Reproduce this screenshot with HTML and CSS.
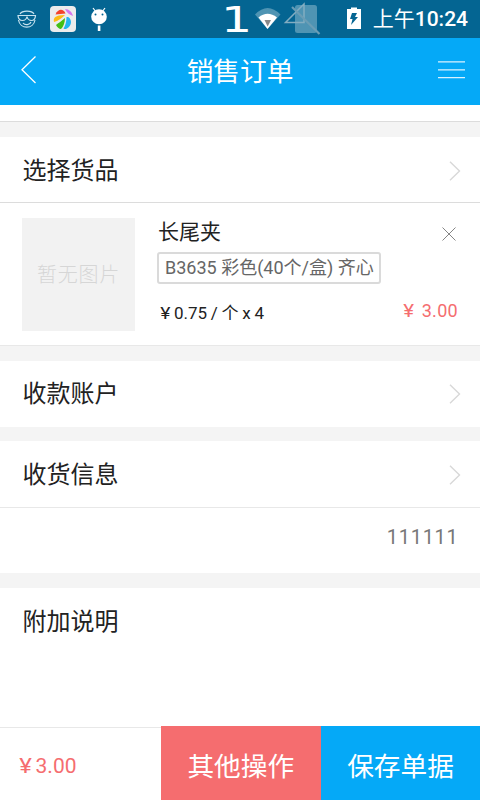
FILE: index.html
```html
<!DOCTYPE html>
<html lang="zh-CN">
<head>
<meta charset="utf-8">
<title>销售订单</title>
<link rel="stylesheet" href="styles.css">
</head>
<body>
<div class="statusbar">
  <svg class="status-icons" width="370" height="38" viewBox="0 0 370 38">
    <g fill="none" stroke="#c8e3ef" stroke-width="1.2">
      <path d="M20 14c2-3.800 12-3.800 14 0M18.500 20c1.500 9.500 15 9.500 16.500 0M23 23c2 2.500 7 2 8-1"/>
      <path d="M18 15.500h17.500c-.3 4-1.500 5-4 5-2.500 0-4-1.500-4.500-4-.5 2.500-2 4-4.500 4s-4.200-1-4.500-5z"/>
    </g>
    <rect x="50" y="6" width="26" height="26" rx="4" fill="#ececec"/>
    <path d="M55.500 14.500c2.500-6 8-6 10-1z" fill="#f4432c"/>
    <path d="M65 9c4 0 7 3 8 7-3-1-6-3-8-7z" fill="#d477ee"/>
    <path d="M54 22c-1-4 1-7 11-7-3 3-7 6-11 7z" fill="#fdbb12"/>
    <path d="M56 25c2-2 6-4 9-7 0 5-2 9-4 11-2 0-4-2-5-4z" fill="#43bf16"/>
    <path d="M66.500 17c4-1 8 8-.5 12-1.500 0-2 0-2.500-.5 2-3 3-7 3-11.500z" fill="#24b5f2"/>
    <g fill="#fff">
      <ellipse cx="99" cy="16.800" rx="7.800" ry="7.500"/>
      <rect x="97.800" y="25.500" width="2.600" height="5.500"/>
      <path d="M93 8l3 4M105 8l-3 4" stroke="#fff" stroke-width="1.200"/>
    </g>
    <circle cx="95.500" cy="14.500" r="1" fill="#046592"/><circle cx="102.500" cy="14.500" r="1" fill="#046592"/>
    <path d="M255 14.500q12.500-13 25.500 0L267.500 29z" fill="#4f94b3"/>
    <path d="M258.500 17.500q9-7.500 18.500 0L267.500 29z" fill="#fff"/>
    <path d="M264.500 20h6.500l-3.300 6.500z" fill="#888"/>
    <rect x="295" y="5" width="22" height="28" rx="2.500" fill="#4f94b3"/>
    <path d="M304 4v18.500h-18.500z" fill="none" stroke="#83adc1" stroke-width="1.500"/>
    <path d="M292 7l27.500 27" stroke="#6a9db5" stroke-width="2.200"/>
    <path d="M347 9h4V7.500h6V9h4v20h-14z" fill="#fff"/>
    <path d="M352 13h5l-2 4h3l-7 8 1.500-6H350z" fill="#046592"/>
  </svg>
  <span class="count">1</span>
  <time class="clock"><span class="period">上午</span>10:24</time>
</div>
<header class="header">
  <svg width="48" height="67" viewBox="0 0 48 67"><path d="M35.500 18.500L22 31.800l13.500 13.200" fill="none" stroke="#fff" stroke-width="1.300"/></svg>
  <h1>销售订单</h1>
  <svg width="48" height="67" viewBox="0 0 48 67"><path d="M6 23.800h27M6 31.800h27M6 39.700h27" stroke="#d9f2ff" stroke-width="1.300"/></svg>
</header>
<main class="content">
  <div class="spacer"></div>
  <section class="row goods">
    <h2>选择货品</h2>
    <svg class="chevron" width="14" height="22" viewBox="0 0 14 22"><path d="M2 1.800L11.500 11 2 20.200"/></svg>
  </section>
  <section class="item">
    <div class="thumb">暂无图片</div>
    <div class="details">
      <div class="name">长尾夹</div>
      <div class="tag">B3635 彩色(40个/盒) 齐心</div>
      <div class="unit"><span class="yen">¥</span>0.75 / 个 x 4</div>
    </div>
    <div class="side">
      <svg width="14" height="14" viewBox="0 0 14 14"><path d="M.5.500l13 13M13.500.500l-13 13" stroke="#858585" stroke-width="1"/></svg>
      <div class="amount"><span class="yen">¥</span>3.00</div>
    </div>
  </section>
  <section class="row account">
    <h2>收款账户</h2>
    <svg class="chevron" width="14" height="22" viewBox="0 0 14 22"><path d="M2 1.800L11.500 11 2 20.200"/></svg>
  </section>
  <section class="row receiver">
    <h2>收货信息</h2>
    <svg class="chevron" width="14" height="22" viewBox="0 0 14 22"><path d="M2 1.800L11.500 11 2 20.200"/></svg>
  </section>
  <div class="phone">111111</div>
  <section class="note"><h2>附加说明</h2></section>
</main>
<footer class="footer">
  <div class="total"><span class="yen">¥</span>3.00</div>
  <div class="button other">其他操作</div>
  <div class="button save">保存单据</div>
</footer>
</body>
</html>
```
FILE: styles.css
```css
* { box-sizing: border-box; }
body {
  margin: 0;
  width: 480px;
  height: 800px;
  overflow: hidden;
  display: flex;
  flex-direction: column;
  background: #f4f4f4;
  color: #222;
  font-family: Roboto, "Noto Sans CJK SC", sans-serif;
}
h1, h2 { margin: 0; font-weight: 400; white-space: nowrap; }
svg { display: block; flex: none; }
.yen { display: inline-block; transform: scaleX(1.14); }
.statusbar {
  position: relative;
  flex: none;
  height: 38px;
  background: #046592;
  color: #fff;
  display: flex;
  justify-content: flex-end;
}
.status-icons { position: absolute; left: 0; top: 0; }
.count {
  position: absolute;
  left: 221px;
  top: 1px;
  font: 35px/38px "DejaVu Sans", sans-serif;
  transform: scaleX(1.4);
  transform-origin: left;
}
.clock { font-size: 21px; line-height: 39px; padding-right: 12px; font-weight: 500; }
.period { font-size: 21px; font-weight: 400; }
.header {
  flex: none;
  height: 67px;
  display: flex;
  justify-content: space-between;
  background: #05a9f7;
  color: #fff;
}
.header h1 { font-size: 26.700px; line-height: 68px; height: 67px; }
.content { flex: 1; min-height: 0; }
.spacer { height: 17px; background: #fff; border-bottom: 1px solid #dcdcdc; }
.row {
  display: flex;
  align-items: center;
  justify-content: space-between;
  background: #fff;
  padding: 2px 18px 0 22.500px;
  height: 66px;
}
h2 { font-size: 24px; line-height: 36px; }
.chevron path { fill: none; stroke: #d8d8d8; stroke-width: 1.400; }
.goods { margin-top: 15px; border-bottom: 1px solid #dcdcdc; }
.item {
  height: 143px;
  display: flex;
  background: #fff;
  border-bottom: 1px solid #e8e8e8;
  padding: 15px 22px 0 22px;
}
.thumb {
  width: 113px;
  height: 113px;
  background: #f2f2f2;
  color: #d6d6d6;
  font-size: 20px;
  font-weight: 300;
  letter-spacing: .8px;
  line-height: 114px;
  text-align: center;
}
.details { margin-left: 22px; white-space: nowrap; }
.name { padding-left: 1px; font-size: 21px; line-height: 29px; height: 28px; }
.tag {
  margin-top: 6px;
  width: 224px;
  height: 32px;
  border: 2px solid #dadada;
  border-radius: 3px;
  padding-left: 6px;
  font-size: 18px;
  line-height: 28px;
  color: #666;
}
.unit { margin-top: 17px; padding-left: 4px; font-size: 17px; line-height: 25px; }
.unit .yen { margin-right: 4px; }
.unit { word-spacing: -.5px; }
.side {
  flex: 1;
  display: flex;
  flex-direction: column;
  align-items: flex-end;
  padding-top: 9px;
}
.side svg { margin-right: 2px; }
.amount { margin-top: 57px; font-size: 18px; line-height: 26px; color: #f56d6f; letter-spacing: .3px; }
.amount .yen { margin-right: 8px; }
.account { margin-top: 15px; padding-top: 0; }
.receiver { margin-top: 14px; height: 67px; padding-top: 1px; border-bottom: 1px solid #e8e8e8; }
.phone {
  height: 65px;
  background: #fff;
  padding-right: 21.500px;
  text-align: right;
  font-size: 20px;
  line-height: 58px;
  letter-spacing: .7px;
  color: #777;
}
.note { margin-top: 15px; height: 140px; background: #fff; padding: 16px 22.500px; }
.footer { flex: none; height: 74px; display: flex; background: #fff; }
.total {
  width: 160.500px;
  margin-top: 1px;
  border-top: 1px solid #e8e8e8;
  padding-left: 20px;
  font-size: 21px;
  line-height: 76px;
  color: #f56d6f;
}
.total .yen { margin-right: 4.500px; }
.button {
  width: 160.500px;
  font-size: 26.700px;
  line-height: 83px;
  height: 74px;
  text-align: center;
  color: #fff;
}
.other { background: #f56d6f; }
.save { background: #05a9f7; flex: 1; }
```
